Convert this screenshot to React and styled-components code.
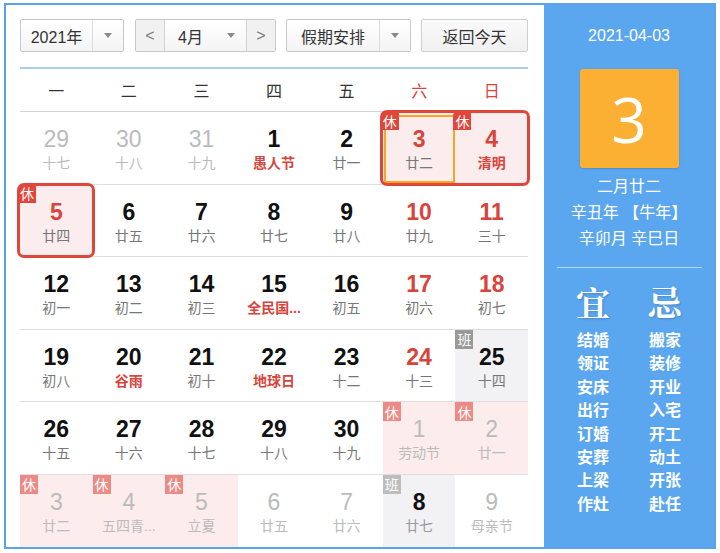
import React from 'react'
import styled, { createGlobalStyle, css } from 'styled-components'

const GlobalStyle = createGlobalStyle`
    body {
        margin: 0;
        background: #fff;
        font-family: "Liberation Sans", "Noto Sans CJK SC", sans-serif;
    }
`

const RED = '#d8443b'
const RING = '#e0463a'

const Frame = styled.div`
    box-sizing: border-box;
    width: 712px;
    height: 546px;
    margin: 3px 0 0 4px;
    border: 2px solid #5ba4ea;
    display: flex;
    background: #fff;
`

const Main = styled.div`
    flex: 1;
    display: flex;
    flex-direction: column;
    padding: 14px 16px 0 14px;
`

const Toolbar = styled.div`
    display: flex;
    height: 33px;
    gap: 10px;
`

const SelectBox = styled.div`
    box-sizing: border-box;
    height: 33px;
    display: flex;
    align-items: stretch;
    border: 1px solid #c8c8c8;
    border-radius: 2px;
    background: linear-gradient(#ffffff, #f4f4f4);
    color: #333;
    font-size: 16px;
    margin-right: ${p => p.$extra || 0}px;
`

const SelectLabel = styled.div`
    width: ${p => p.$w}px;
    display: flex;
    align-items: center;
    justify-content: center;
`

const SelectArrow = styled.div`
    width: ${p => p.$w || 31}px;
    box-sizing: border-box;
    display: flex;
    align-items: center;
    justify-content: center;
    ${p => p.$divided && css`border-left: 1px solid #dcdcdc;`}

    &::after {
        content: "";
        border-left: 4px solid transparent;
        border-right: 4px solid transparent;
        border-top: 5px solid #8a8a8a;
    }
`

const NavBtn = styled.div`
    width: 28px;
    display: flex;
    align-items: center;
    justify-content: center;
    background: #f1f1f1;
    color: #777;
    font-size: 16px;
    ${p => p.$side === 'left' ? css`border-right: 1px solid #d2d2d2;` : css`border-left: 1px solid #d2d2d2;`}
`

const TodayButton = styled.div`
    box-sizing: border-box;
    width: 107px;
    height: 33px;
    border: 1px solid #cfcfcf;
    border-radius: 2px;
    background: linear-gradient(#fafafa, #f0f0f0);
    color: #333;
    font-size: 16px;
    display: flex;
    align-items: center;
    justify-content: center;
`

const WeekHeader = styled.div`
    margin-top: 15px;
    height: 45px;
    box-sizing: border-box;
    border-top: 2px solid #a9d0e4;
    border-bottom: 1px solid #d4d4d4;
    display: grid;
    grid-template-columns: repeat(7, 1fr);
    align-items: center;
`

const WeekDay = styled.div`
    text-align: center;
    font-size: 16px;
    color: ${p => p.$weekend ? RED : '#333'};
`

const Grid = styled.div`
    flex: 1;
    display: grid;
    grid-template-columns: repeat(7, 1fr);
    grid-template-rows: repeat(6, 1fr);
`

const ringCss = css`
    &::after {
        content: "";
        position: absolute;
        z-index: 2;
        top: -2px;
        bottom: -2px;
        left: ${p => p.$ring === 'right' ? '0' : '-3px'};
        right: ${p => p.$ring === 'left' ? '0' : '-2px'};
        border: 3px solid ${RING};
        ${p => p.$ring === 'left' && css`border-right: none; border-radius: 7px 0 0 7px;`}
        ${p => p.$ring === 'right' && css`border-left: none; border-radius: 0 7px 7px 0;`}
        ${p => p.$ring === 'both' && css`border-radius: 7px;`}
        pointer-events: none;
    }
`

const Cell = styled.div`
    position: relative;
    display: flex;
    flex-direction: column;
    align-items: center;
    padding-top: 14px;
    border-bottom: ${p => p.$last ? 'none' : '1px solid #dedede'};
    background: ${p => p.$bg || 'transparent'};
    ${p => p.$ring && ringCss}
    ${p => p.$today && css`
        &::before {
            content: "";
            position: absolute;
            z-index: 1;
            top: 3px;
            bottom: 1px;
            left: 1px;
            right: 0;
            border: 2px solid #f6a623;
        }
    `}
`

const DayNum = styled.div`
    font-size: 23px;
    line-height: 26px;
    font-weight: ${p => p.$bold ? 700 : 400};
    color: ${p => p.$color};
`

const Lunar = styled.div`
    font-size: 14px;
    line-height: 22px;
    white-space: nowrap;
    color: ${p => p.$color};
    font-weight: ${p => p.$bold ? 700 : 400};
`

const Badge = styled.div`
    position: absolute;
    z-index: 3;
    top: ${p => p.$ringed ? '-1px' : '0'};
    left: ${p => p.$ringed ? '-2px' : '0'};
    width: 18px;
    height: 19px;
    display: flex;
    align-items: center;
    justify-content: center;
    font-size: 14px;
    color: #fff;
    background: ${p => p.$color};
    border-radius: ${p => p.$ringed ? '5px 0 0 0' : '0'};
`

const Side = styled.div`
    width: 170px;
    background: #5aa6ef;
    color: #fff;
    display: flex;
    flex-direction: column;
    align-items: center;
    padding-top: 21px;
`

const SideDate = styled.div`
    font-size: 16px;
    line-height: 20px;
`

const BigDay = styled.div`
    margin-top: 23px;
    width: 99px;
    height: 99px;
    border-radius: 3px;
    background: #fbb034;
    box-shadow: 0 1px 2px rgba(0, 0, 0, 0.15);
    display: flex;
    align-items: center;
    justify-content: center;
    font-size: 62px;
    font-family: "Open Sans", "Liberation Sans", sans-serif;
    font-weight: 400;
`

const LunarInfo = styled.div`
    margin-top: 6px;
    font-size: 16px;
    line-height: 26px;
    text-align: center;
`

const Divider = styled.div`
    margin-top: 15px;
    width: 145px;
    height: 1px;
    background: rgba(255, 255, 255, 0.55);
`

const Almanac = styled.div`
    margin-top: 14px;
    display: grid;
    grid-template-columns: 72px 72px;
`

const AlmanacCol = styled.div`
    display: flex;
    flex-direction: column;
    align-items: center;
`

const AlmanacHead = styled.div`
    font-family: "Noto Serif CJK SC", "Noto Sans CJK SC", serif;
    font-size: 34px;
    line-height: 40px;
    font-weight: 700;
    text-shadow: 1px 1px 2px rgba(0, 0, 0, 0.2);
`

const AlmanacList = styled.div`
    margin-top: 7px;
    display: flex;
    flex-direction: column;
    align-items: center;
`

const AlmanacItem = styled.div`
    font-size: 16px;
    line-height: 23.4px;
    font-weight: 700;
`

// o: other month, wk: weekend red, red: red label, rest: 休, work: 班
const days = [
    { n: 29, l: '十七', o: 1 }, { n: 30, l: '十八', o: 1 }, { n: 31, l: '十九', o: 1 },
    { n: 1, l: '愚人节', red: 1 }, { n: 2, l: '廿一' },
    { n: 3, l: '廿二', wk: 1, rest: 1, ring: 'left', today: 1 },
    { n: 4, l: '清明', wk: 1, rest: 1, red: 1, ring: 'right' },

    { n: 5, l: '廿四', wk: 1, rest: 1, ring: 'both' }, { n: 6, l: '廿五' }, { n: 7, l: '廿六' },
    { n: 8, l: '廿七' }, { n: 9, l: '廿八' }, { n: 10, l: '廿九', wk: 1 }, { n: 11, l: '三十', wk: 1 },

    { n: 12, l: '初一' }, { n: 13, l: '初二' }, { n: 14, l: '初三' }, { n: 15, l: '全民国...', red: 1 },
    { n: 16, l: '初五' }, { n: 17, l: '初六', wk: 1 }, { n: 18, l: '初七', wk: 1 },

    { n: 19, l: '初八' }, { n: 20, l: '谷雨', red: 1 }, { n: 21, l: '初十' }, { n: 22, l: '地球日', red: 1 },
    { n: 23, l: '十二' }, { n: 24, l: '十三', wk: 1 }, { n: 25, l: '十四', work: 1 },

    { n: 26, l: '十五' }, { n: 27, l: '十六' }, { n: 28, l: '十七' }, { n: 29, l: '十八' }, { n: 30, l: '十九' },
    { n: 1, l: '劳动节', o: 1, rest: 1 }, { n: 2, l: '廿一', o: 1, rest: 1 },

    { n: 3, l: '廿二', o: 1, rest: 1 }, { n: 4, l: '五四青...', o: 1, rest: 1 }, { n: 5, l: '立夏', o: 1, rest: 1 },
    { n: 6, l: '廿五', o: 1 }, { n: 7, l: '廿六', o: 1 }, { n: 8, l: '廿七', o: 1, work: 1 }, { n: 9, l: '母亲节', o: 1 },
]

const yi = ['结婚', '领证', '安床', '出行', '订婚', '安葬', '上梁', '作灶']
const ji = ['搬家', '装修', '开业', '入宅', '开工', '动土', '开张', '赴任']

function DayCell({ d, last }) {
    let numColor = '#111'
    let lunarColor = '#777'
    let bold = true
    let bg
    if (d.wk) numColor = RED
    if (d.red) lunarColor = RED
    if (d.o) {
        numColor = '#bbb'
        lunarColor = '#bbb'
        bold = false
    }
    if (d.o && d.work) {
        numColor = '#111'
        bold = true
        lunarColor = '#999'
    }
    if (d.rest) bg = d.o ? '#fcecec' : '#fbeced'
    if (d.work) bg = '#f2f2f4'

    let badge = null
    if (d.rest) {
        badge = <Badge $ringed={!!d.ring} $color={d.o ? '#ec8b86' : RING}>休</Badge>
    }
    if (d.work) {
        badge = <Badge $color={d.o ? '#bdbdbd' : '#9a9a9a'}>班</Badge>
    }

    return (<Cell $last={last} $bg={bg} $ring={d.ring} $today={d.today}>
        {badge}
        <DayNum $color={numColor} $bold={bold}>{d.n}</DayNum>
        <Lunar $color={lunarColor} $bold={d.red && !d.o}>{d.l}</Lunar>
    </Cell>)
}

export default function App() {
    const weekdays = ['一', '二', '三', '四', '五', '六', '日']

    return (<>
        <GlobalStyle />
        <Frame>
            <Main>
                <Toolbar>
                    <SelectBox $extra={1}>
                        <SelectLabel $w={71}>2021年</SelectLabel>
                        <SelectArrow $divided />
                    </SelectBox>
                    <SelectBox>
                        <NavBtn $side="left">&lt;</NavBtn>
                        <SelectLabel $w={51}>4月</SelectLabel>
                        <SelectArrow $w={30} />
                        <NavBtn $side="right">&gt;</NavBtn>
                    </SelectBox>
                    <SelectBox>
                        <SelectLabel $w={92}>假期安排</SelectLabel>
                        <SelectArrow $divided />
                    </SelectBox>
                    <TodayButton>返回今天</TodayButton>
                </Toolbar>

                <WeekHeader>
                    {weekdays.map((w, i) => <WeekDay key={w} $weekend={i > 4}>{w}</WeekDay>)}
                </WeekHeader>

                <Grid>
                    {days.map((d, i) => <DayCell key={i} d={d} last={i >= 35} />)}
                </Grid>
            </Main>

            <Side>
                <SideDate>2021-04-03</SideDate>
                <BigDay>3</BigDay>
                <LunarInfo>
                    <div>二月廿二</div>
                    <div>辛丑年 【牛年】</div>
                    <div>辛卯月 辛巳日</div>
                </LunarInfo>
                <Divider />
                <Almanac>
                    <AlmanacCol>
                        <AlmanacHead>宜</AlmanacHead>
                        <AlmanacList>
                            {yi.map(t => <AlmanacItem key={t}>{t}</AlmanacItem>)}
                        </AlmanacList>
                    </AlmanacCol>
                    <AlmanacCol>
                        <AlmanacHead>忌</AlmanacHead>
                        <AlmanacList>
                            {ji.map(t => <AlmanacItem key={t}>{t}</AlmanacItem>)}
                        </AlmanacList>
                    </AlmanacCol>
                </Almanac>
            </Side>
        </Frame>
    </>)
}
